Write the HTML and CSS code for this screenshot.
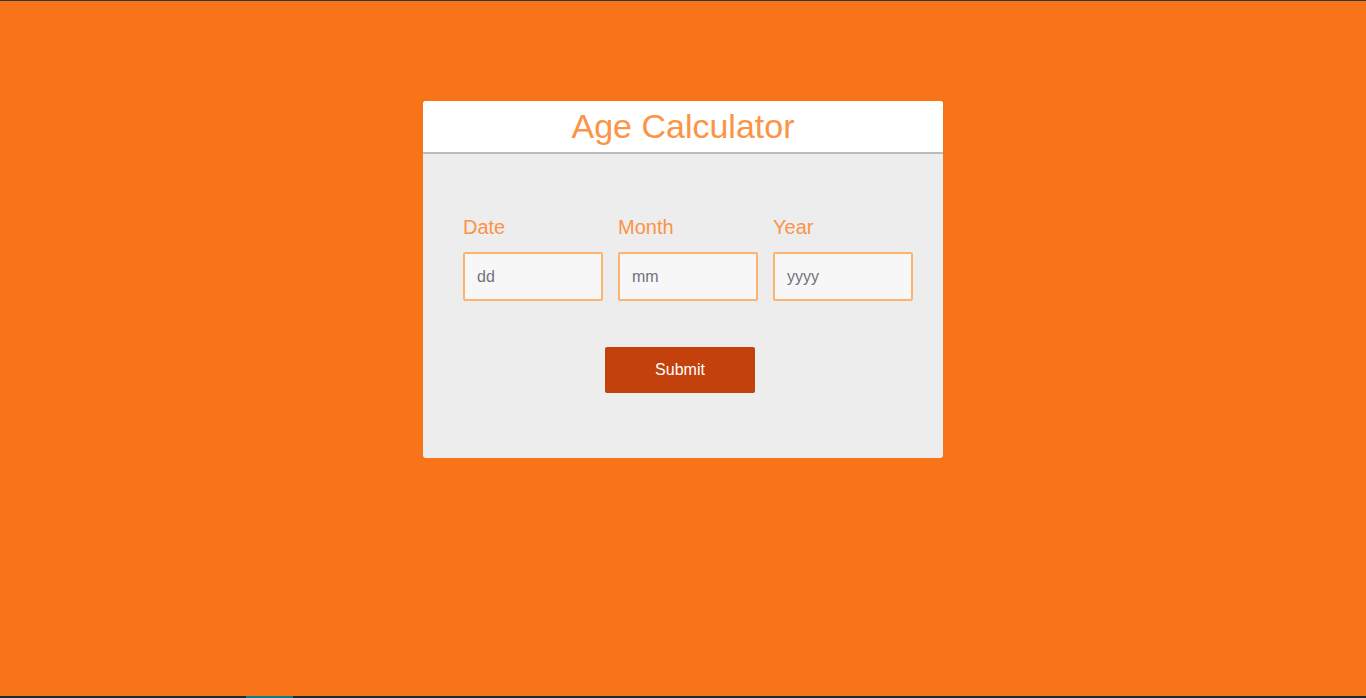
FILE: index.html
```html
<!DOCTYPE html>
<html lang="en">
<head>
    <meta charset="UTF-8">
    <meta name="viewport" content="width=device-width, initial-scale=1.0">
    <title>Age Calculator</title>
    <link rel="stylesheet" href="styles.css">
</head>
<body>
    <div class="page">
        <main class="main">
            <div class="card">
                <div class="card-header">
                    <h1>Age Calculator</h1>
                </div>
                <form class="card-body" action="javascript:void(0);">
                    <div class="fields">
                        <div class="field">
                            <label for="date">Date</label>
                            <input type="text" id="date" placeholder="dd">
                        </div>
                        <div class="field">
                            <label for="month">Month</label>
                            <input type="text" id="month" placeholder="mm">
                        </div>
                        <div class="field">
                            <label for="year">Year</label>
                            <input type="text" id="year" placeholder="yyyy">
                        </div>
                    </div>
                    <button type="submit" class="submit">Submit</button>
                </form>
            </div>
        </main>
        <div class="taskbar">
            <span class="taskbar-item"></span>
        </div>
    </div>
</body>
</html>
```

FILE: styles.css
```css
* {
    box-sizing: border-box;
}

body {
    margin: 0;
    font-family: "Liberation Sans", Arial, sans-serif;
    background-color: #f97418;
}

.page {
    height: 698px;
    display: flex;
    flex-direction: column;
    border-top: 1px solid #2f3a3c;
    overflow: hidden;
}

.main {
    flex: 1;
}

.card {
    width: 520px;
    margin: 100px auto 0;
    border-radius: 3px;
    overflow: hidden;
    background-color: #ededed;
}

.card-header {
    background-color: #fff;
    height: 53px;
    padding-top: 6px;
    border-bottom: 2px solid #bcbcbc;
    text-align: center;
}

.card-header h1 {
    margin: 0;
    font-size: 34px;
    font-weight: normal;
    line-height: 39px;
    color: #fb9446;
}

.card-body {
    height: 304px;
    padding: 62px 15px 0 40px;
    margin: 0;
}

.fields {
    display: grid;
    grid-template-columns: repeat(3, 140px);
    gap: 15px;
}

.field label {
    display: block;
    font-size: 20px;
    line-height: 23px;
    color: #fb9446;
    margin-bottom: 13px;
}

.field input {
    display: block;
    width: 140px;
    height: 49px;
    padding: 0 12px;
    border: 2px solid #fdb46e;
    border-radius: 2px;
    background-color: #f7f7f7;
    font-family: "Liberation Sans", Arial, sans-serif;
    font-size: 16px;
    outline: none;
}

.field input::placeholder {
    color: #72727e;
}

.submit {
    display: block;
    width: 150px;
    height: 46px;
    margin: 46px 0 0 142px;
    border: none;
    border-radius: 2px;
    background-color: #c2410c;
    color: #fff;
    font-family: "Liberation Sans", Arial, sans-serif;
    font-size: 16px;
    cursor: pointer;
}

.taskbar {
    height: 2px;
    background-color: #1d2b2b;
    display: flex;
}

.taskbar-item {
    width: 47px;
    margin-left: 246px;
    background-color: #0f7c84;
}
```
